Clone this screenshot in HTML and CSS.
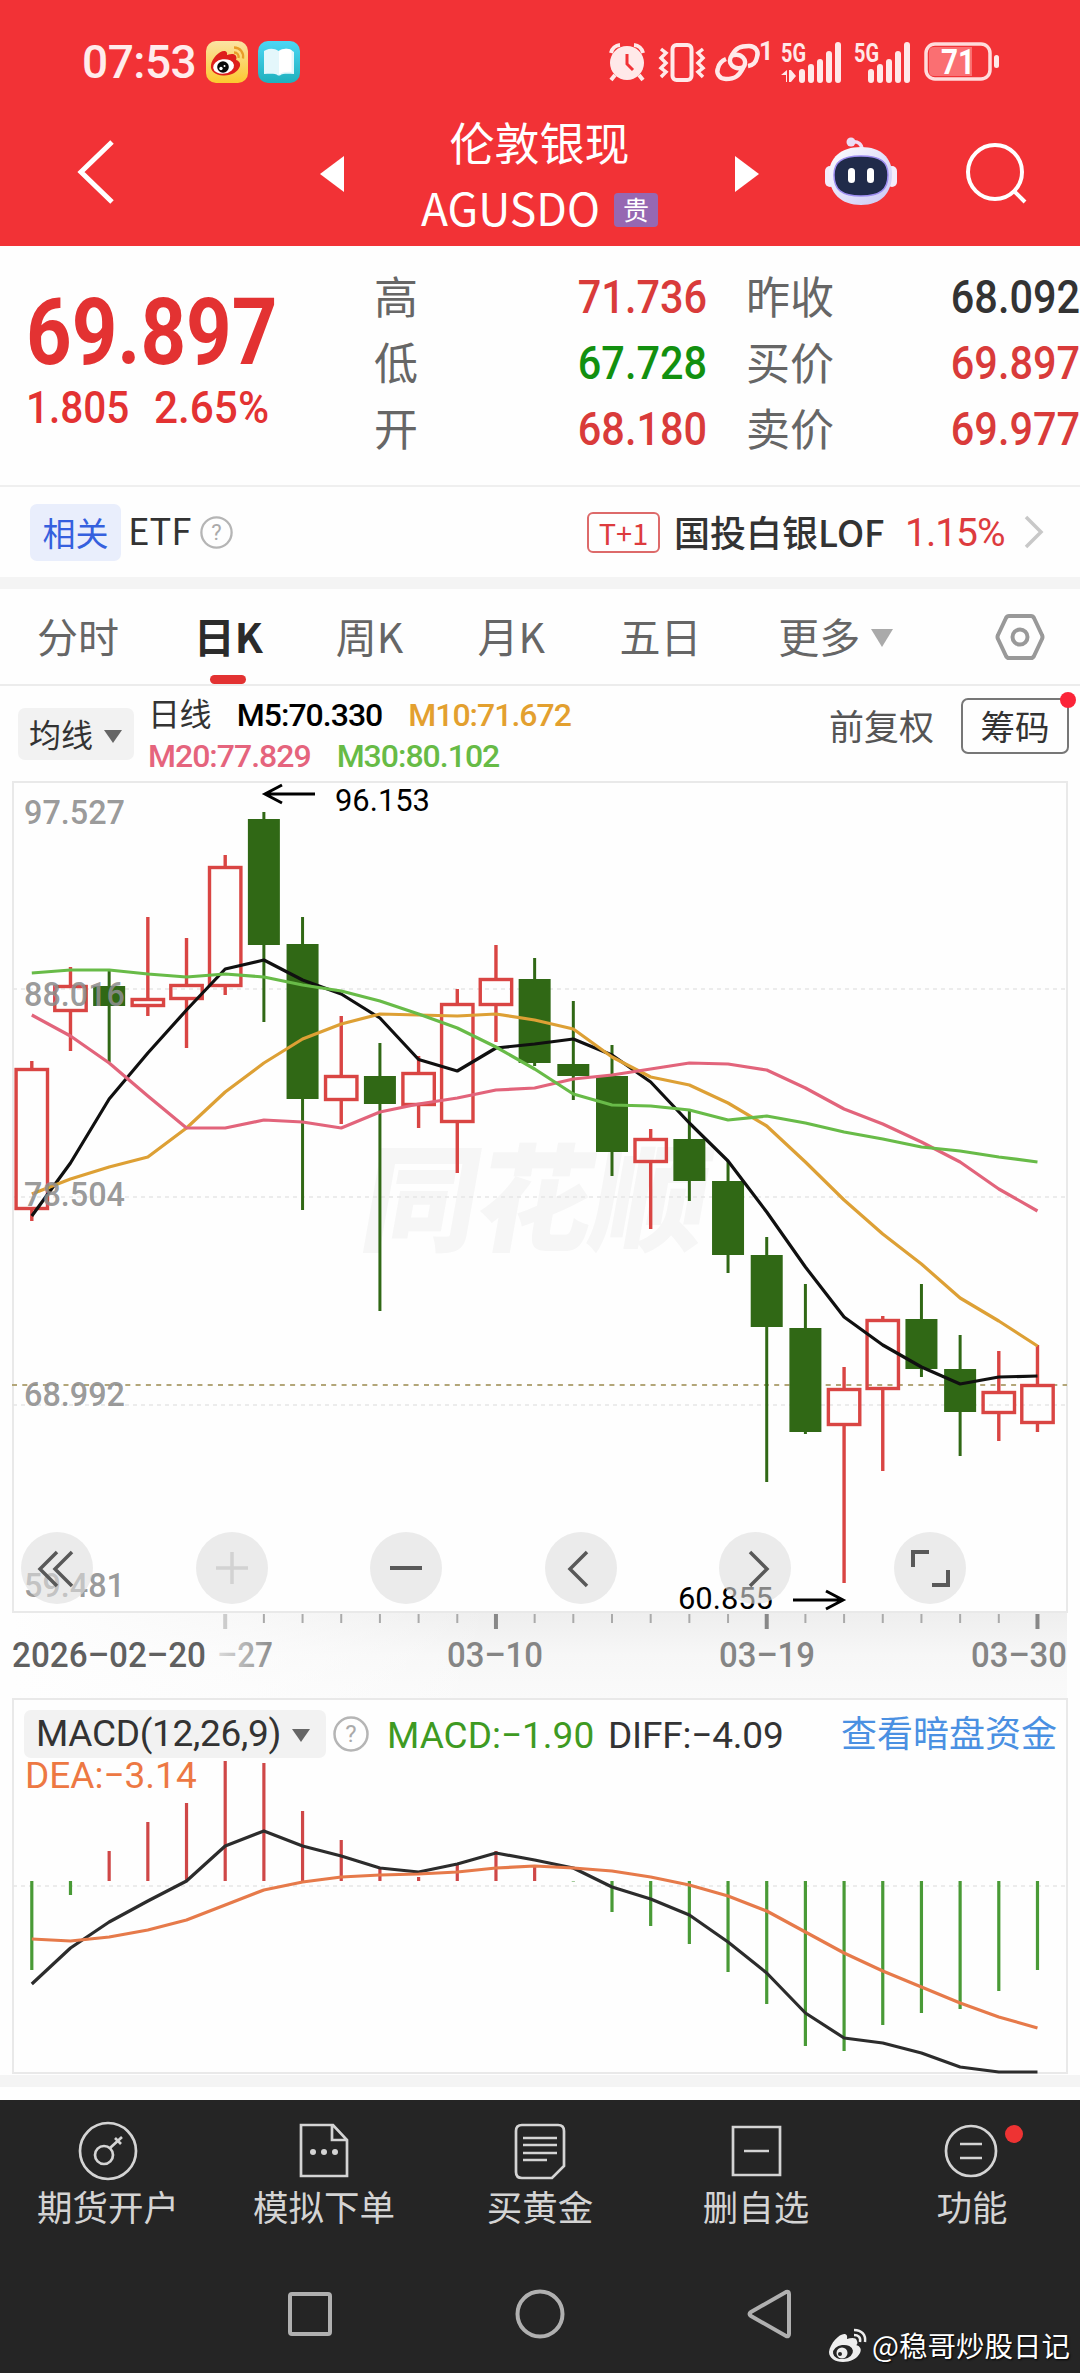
FILE: index.html
```html
<!DOCTYPE html>
<html lang="zh-CN">
<head>
  <meta charset="UTF-8" />
  <title>伦敦银现 AGUSDO</title>
  <link rel="stylesheet" href="styles.css">
</head>

<body>
  <header class="header">
    <div class="status">
      <span class="time">07:53</span>
      <svg class="app" viewBox="0 0 42 42">
        <defs><linearGradient id="gold" x2="0" y2="1"><stop stop-color="#fbe3a4" /><stop offset="1" stop-color="#fcc92f" /></linearGradient></defs>
        <rect width="42" height="42" rx="10" fill="url(#gold)" />
        <path d="M5 24c1-7 9-15 14-14 3 1 2 4 2 4s7-3 9 1c1 2 0 4 0 4s5 1 4 6c-2 6-9 10-17 9.500C9 34 4 30 5 24z" fill="#de1f1c" />
        <ellipse cx="17.500" cy="25.500" rx="10.500" ry="7.200" fill="#fff" transform="rotate(-8 17 25)" />
        <circle cx="17" cy="26" r="5.800" fill="#0a0a0a" /><circle cx="15" cy="27.500" r="1.700" fill="#fff" /><circle cx="18.500" cy="25" r="1" fill="#fff" />
        <path d="M28 6.500c6 0 10 5 9 11M28 11.500c3.500 0 5 2.500 4.500 5.500" fill="none" stroke="#e99c2a" stroke-width="2.300" />
      </svg>
      <svg class="app" viewBox="0 0 42 42">
        <defs><linearGradient id="cyan" x2="0" y2="1"><stop stop-color="#4cd7f5" /><stop offset="1" stop-color="#1fb0bd" /></linearGradient></defs>
        <rect width="42" height="42" rx="10" fill="url(#cyan)" />
        <path d="M6 10l2-1c4-2 9-1.500 12.500 1 3.500-2.500 8.500-3 12.500-1l3 2v22c-5 0-11-1-14 1.500h-2C17 32 11 33 6 33z" fill="#e4f7fb" />
        <path d="M21 10.500c3.500-3 8.500-3.500 12.500-1.500v22c-5-.5-9 0-12.500 2.500z" fill="#fff" />
      </svg>

      <div class="status-right">
        <svg width="38" height="40" viewBox="0 0 38 40">
          <circle cx="19" cy="21" r="17" fill="#ffe9e9" />
          <path d="M3 11a10 10 0 0 1 9-8M35 11a10 10 0 0 0-9-8M7 33l-4 5M31 33l4 5" stroke="#ffe9e9" stroke-width="4" fill="none" />
          <path d="M19 12v10l6 6" stroke="#f23236" stroke-width="3" fill="none" />
        </svg>
        <svg width="46" height="40" viewBox="0 0 46 40">
          <rect x="13.500" y="3" width="19" height="35" rx="4" stroke="#ffe9e9" stroke-width="4" fill="none" />
          <path d="M2 7l5 4-5 5 5 5-5 5 5 4-5 5M44 7l-5 4 5 5-5 5 5 5-5 4 5 5" stroke="#ffe9e9" stroke-width="3.500" fill="none" />
        </svg>
        <svg width="58" height="42" viewBox="0 0 58 42">
          <path d="M30 26c-10 4-18-4-12-12 4-7 8-9 17-9 7 0 10 6 8 11-1 5-3 8-9 9" stroke="#ffe9e9" stroke-width="4.500" fill="none" />
          <path d="M16 15c10-4 18 4 12 12-4 8-8 11-17 11C4 38 1 32 3 27c1-4 3-7 8-9" stroke="#ffe9e9" stroke-width="4.500" fill="none" transform="translate(1)" />
          <text x="45" y="19" class="tiny">1</text>
        </svg>
        <svg width="61" height="42" viewBox="0 0 61 42">
          <text x="0" y="21" class="tiny" textLength="25" lengthAdjust="spacingAndGlyphs">5G</text>
          <path d="M0 34l6-5v12H5v-7zM8 29h2l5 6-5 6H8z" fill="#ffe9e9" />
          <path d="M21 31v8M30 26v13M39 21v18M48 13v26M57 4v35" class="bars" />
        </svg>
        <svg width="57" height="42" viewBox="0 0 57 42">
          <text x="0" y="21" class="tiny" textLength="25" lengthAdjust="spacingAndGlyphs">5G</text>
          <path d="M17 31v8M26 26v13M35 21v18M44 13v26M53 4v35" class="bars" />
        </svg>
        <svg width="76" height="40" viewBox="0 0 76 40">
          <rect x="2" y="2" width="64" height="35" rx="9" fill="none" stroke="#ffdcdc" stroke-width="3.500" />
          <path d="M10 5h38v29H10q-5 0-5-5V10q0-5 5-5z" fill="#fa6f72" />
          <rect x="70" y="13" width="5" height="13" rx="2.500" fill="#ffe9e9" />
          <text x="17" y="32" class="battery" textLength="34" lengthAdjust="spacingAndGlyphs">71</text>
        </svg>
      </div>
    </div>

    <div class="topbar">
      <svg class="back" viewBox="0 0 38 66"><path d="M35 3L4 33l31 30" fill="none" stroke="#fff" stroke-width="5" /></svg>
      <svg class="prev" viewBox="0 0 24 36"><path d="M24 0v36L0 18z" fill="#fff" /></svg>
      <div class="title">
        <div class="name">伦敦银现</div>
        <div class="code">AGUSDO<span class="tag">贵</span></div>
      </div>
      <svg class="next" viewBox="0 0 24 36"><path d="M0 0v36l24-18z" fill="#fff" /></svg>
      <svg class="robot" viewBox="0 0 74 68">
        <defs><linearGradient id="shell" x2="1" y2="1"><stop stop-color="#fff" /><stop offset="1" stop-color="#c9c6f4" /></linearGradient></defs>
        <path d="M28 5c6-1 10 2 10 8" fill="none" stroke="#f3dcf3" stroke-width="3.500" />
        <circle cx="27" cy="5" r="4.500" fill="#ecdcf4" />
        <rect x="1" y="29" width="10" height="21" rx="5" fill="#f4ecfb" /><rect x="63" y="29" width="10" height="21" rx="5" fill="#f4ecfb" />
        <path d="M37 10c20 0 31 11 31 27 0 19-11 31-31 31S5 56 5 37c0-16 12-27 32-27z" fill="url(#shell)" />
        <path d="M37 19c20 0 27 6 27 19 0 15-8 21-27 21S10 53 10 38c0-13 8-19 27-19z" fill="#202b4a" stroke="#9d8df0" stroke-width="1.500" />
        <rect x="24" y="31" width="7" height="15" rx="3.500" fill="#fff" /><rect x="43" y="31" width="7" height="15" rx="3.500" fill="#fff" />
      </svg>
      <svg class="search" viewBox="0 0 62 62"><circle cx="29" cy="29" r="27" fill="none" stroke="#fff" stroke-width="4" /><path d="M48 48l11 11" stroke="#fff" stroke-width="4" /></svg>
    </div>
  </header>

  <section class="quote">
    <div class="price">
      <div class="last din">69.897</div>
      <div class="change"><span class="din">1.805</span><span class="din">2.65%</span></div>
    </div>
    <div class="facts">
      <span>高</span><b class="din up">71.736</b>
      <span>低</span><b class="din down">67.728</b>
      <span>开</span><b class="din up">68.180</b>
    </div>
    <div class="facts">
      <span>昨收</span><b class="din">68.092</b>
      <span>买价</span><b class="din up">69.897</b>
      <span>卖价</span><b class="din up">69.977</b>
    </div>
  </section>

  <section class="related">
    <span class="badge">相关</span>
    <span class="etf">ETF</span>
    <svg class="help" viewBox="0 0 36 36"><circle cx="18" cy="18" r="16.500" /><text x="18" y="26">?</text></svg>
    <span class="t1">T+1</span>
    <span class="fund">国投白银LOF</span>
    <span class="pct">1.15%</span>
    <svg class="arrow" viewBox="0 0 20 34"><path d="M2 2l15 15L2 32" fill="none" stroke="#c8c8c8" stroke-width="3.500" /></svg>
  </section>

  <nav class="tabs">
    <span>分时</span>
    <span class="active">日K</span>
    <span>周K</span>
    <span>月K</span>
    <span class="five">五日</span>
    <span class="more">更多<i class="caret"></i></span>
    <svg viewBox="0 0 50 48"><path d="M14 3h22q2 0 3 2l8 17q1 2 0 4l-8 17q-1 2-3 2H14q-2 0-3-2L3 26q-1-2 0-4l8-17q1-2 3-2z" /><circle cx="25" cy="24" r="7.500" /></svg>
  </nav>

  <section class="ma">
    <span class="select">均线<i class="caret dark"></i></span>
    <div class="ma-values">
      <div><span class="cn">日线</span><span class="m5">M5:70.330</span><span class="m10">M10:71.672</span></div>
      <div><span class="m20">M20:77.829</span><span class="m30">M30:80.102</span></div>
    </div>
    <span class="adjust">前复权</span>
    <span class="chips">筹码</span>
  </section>

  <section class="kline">
    <svg id="kline" width="1080" height="917" viewBox="0 781 1080 917"></svg>
    <div class="tools">
      <svg viewBox="0 0 72 72"><path d="M36 20L19 37l17 17M51 20L34 37l17 17" /></svg>
      <svg class="off" viewBox="0 0 72 72"><path d="M36 20v32M20 36h32" /></svg>
      <svg viewBox="0 0 72 72"><path d="M20 36h32" stroke-width="4" /></svg>
      <svg viewBox="0 0 72 72"><path d="M42 20L25 37l17 17" /></svg>
      <svg viewBox="0 0 72 72"><path d="M31 20l17 17-17 17" /></svg>
      <svg viewBox="0 0 72 72"><path d="M19 35V20h16M54 38v15H38" stroke-width="4" /></svg>
    </div>
  </section>

  <section class="macd">
    <div class="macd-head">
      <span class="select">MACD(12,26,9)<i class="caret dark"></i></span>
      <svg class="help" viewBox="0 0 36 36"><circle cx="18" cy="18" r="16.500" /><text x="18" y="26">?</text></svg>
      <span class="v-macd">MACD:−1.90</span>
      <span class="v-diff">DIFF:−4.09</span>
      <a class="link">查看暗盘资金</a>
    </div>
    <div class="dea">DEA:−3.14</div>
    <svg id="macd" width="1080" height="377" viewBox="0 1698 1080 377"></svg>
  </section>
  <div class="gap"></div>

  <footer class="footer">
    <div class="menu">
      <div><svg viewBox="0 0 60 60"><circle cx="30" cy="30" r="28" /><circle cx="26" cy="34" r="9" /><path d="M32 27l12-11M37 17l6 6" /></svg>期货开户</div>
      <div><svg viewBox="0 0 60 60"><path d="M7 4h32l14 15v36H7zM38 4v15h15" /><g class="dots"><circle cx="19" cy="31" r="3" /><circle cx="30" cy="31" r="3" /><circle cx="41" cy="31" r="3" /></g></svg>模拟下单</div>
      <div><svg viewBox="0 0 60 60"><path d="M12 4h36q6 0 6 6v35L42 57H12q-6 0-6-6V10q0-6 6-6zM13 17h34M13 24h34M13 32h34M13 39h24" /></svg>买黄金</div>
      <div><svg viewBox="0 0 60 60"><path d="M7 6h47v48H7zM18 30h25" /></svg>删自选</div>
      <div><svg viewBox="0 0 60 60"><circle cx="29" cy="30" r="25" /><path d="M18 23h22M18 37h22" /></svg>功能<i class="dot"></i></div>
    </div>
    <div class="system">
      <svg viewBox="0 0 50 50"><rect x="5" y="5" width="40" height="40" rx="2" /></svg>
      <svg viewBox="0 0 50 50"><circle cx="25" cy="25" r="22.500" /></svg>
      <svg viewBox="0 0 50 50"><path d="M6 23L41 3q3-1 3 2v40q0 3-3 2L6 27q-3-2 0-4z" /></svg>
    </div>
    <div class="credit">
      <svg viewBox="0 0 40 34">
        <path d="M1 24C2 15 12 5 17 6c3 1 2 4 2 5 4-1 9-2 10 2 1 2 0 4-1 4 4 1 6 4 4 8-3 6-10 9-17 9C7 34 1 30 1 24z" fill="#eee" />
        <ellipse cx="15" cy="24" rx="10" ry="7" fill="#252525" transform="rotate(-8 15 24)" /><circle cx="14" cy="25" r="5.500" fill="#eee" />
        <circle cx="12" cy="26" r="2" fill="#252525" /><path d="M26 2c8 0 12 5 11 12M26 7c4 0 7 2 6 7" fill="none" stroke="#eee" stroke-width="2.500" />
      </svg>
      @稳哥炒股日记
    </div>
  </footer>

  <script src="chart.js"></script>
</body>
</html>
```

FILE: styles.css
```css
* {
  box-sizing: border-box;
  margin: 0;
  padding: 0;
}

body {
  width: 1080px;
  background-color: #fefefe;
  color: #333;
  font-family: "Noto Sans CJK SC", sans-serif;
  line-height: 1;
}

svg {
  display: block;
  flex: none;
  overflow: visible;
}

i {
  font-style: normal;
}

/* narrow figures, like DIN */
.din {
  display: inline-block;
  font-family: Roboto, sans-serif;
  font-weight: 500;
  transform: scaleX(0.9);
  transform-origin: left;
}

.up {
  color: #d93b3a;
}
.down {
  color: #12900f;
}

/* header */
.header {
  height: 246px;
  background-color: #f23236;
  color: white;
}

.status {
  display: flex;
  align-items: center;
  height: 122px;
  padding: 2px 80px 0 82px;
}
.time {
  width: 124px;
  font-family: Roboto, sans-serif;
  font-size: 46px;
  font-weight: 500;
  letter-spacing: -0.5px;
  color: #ffecec;
}
.app {
  width: 42px;
  height: 42px;
  margin-right: 10px;
}
.status-right {
  display: flex;
  align-items: center;
  margin-left: auto;
  gap: 13px;
}
.status-right svg:nth-child(3) {
  margin-left: -4px;
}
.status-right svg:nth-child(4) {
  margin-left: -4px;
}
.status-right svg:nth-child(5) {
  margin-left: -1px;
}
.tiny {
  font-family: Roboto, sans-serif;
  font-size: 25px;
  font-weight: 700;
  fill: #ffe9e9;
}
.battery {
  font-family: Roboto, sans-serif;
  font-size: 35px;
  font-weight: 700;
  fill: white;
}
.bars {
  stroke: #ffe9e9;
  stroke-width: 6;
  stroke-linecap: round;
}

.topbar {
  display: flex;
  height: 124px;
  padding-left: 77px;
}
.back {
  width: 38px;
  height: 66px;
  margin-top: 17px;
}
.prev,
.next {
  width: 24px;
  height: 36px;
  margin-top: 34px;
}
.prev {
  margin-left: 205px;
}
.title {
  width: 391px;
  text-align: center;
}
.name {
  font-size: 45px;
  line-height: 46px;
  margin-top: -3px;
}
.code {
  display: flex;
  align-items: center;
  justify-content: center;
  font-size: 44.5px;
  line-height: 60px;
  margin-top: 12px;
}
.tag {
  width: 44px;
  height: 34px;
  margin: 5px 0 0 14px;
  border-radius: 4px;
  background-color: #9668b2;
  font-size: 26px;
  line-height: 32px;
}
.robot {
  width: 74px;
  height: 68px;
  margin: 15px 0 0 65px;
}
.search {
  width: 62px;
  height: 62px;
  margin: 21px 0 0 68px;
}

/* quote */
.quote {
  display: flex;
  height: 241px;
  padding-top: 18px;
  border-bottom: 2px solid #efefef;
}
.price {
  width: 374px;
  padding: 23px 0 0 26px;
  color: #e33232;
}
.last {
  font-size: 92px;
  line-height: 92px;
  font-weight: 700;
  transform: scaleX(0.865);
}
.change {
  display: flex;
  gap: 13px;
  margin-top: 6px;
  font-size: 45px;
}
.change .din:last-child {
  transform: scaleX(0.94);
}
.facts {
  display: grid;
  grid-template-columns: auto 1fr;
  grid-auto-rows: 66px;
  align-items: center;
  align-content: start;
  width: 333px;
  margin-right: 39px;
  font-size: 44px;
}
.facts:last-child {
  width: 334px;
  margin-right: 0;
}
.facts span {
  color: #666;
  padding-bottom: 5px;
}
.facts b {
  font-size: 46px;
  text-align: right;
  transform-origin: right;
}

.related {
  display: flex;
  align-items: center;
  height: 90px;
  padding-left: 30px;
}
.badge {
  width: 91px;
  border-radius: 7px;
  background-color: #e9eefc;
  color: #3560de;
  font-size: 33px;
  line-height: 57px;
  text-align: center;
}
.etf {
  width: 71px;
  padding: 0 0 3px 7px;
  font-size: 36.5px;
}
.help {
  width: 33px;
  height: 33px;
}
.help circle {
  fill: none;
  stroke: #b5b5b5;
  stroke-width: 2.5;
}
.help text {
  font-family: Roboto, sans-serif;
  font-size: 24px;
  fill: #aaa;
  text-anchor: middle;
}
.related .help {
  margin-left: 8px;
}
.t1 {
  width: 73px;
  height: 41px;
  margin-left: 354px;
  border: 2px solid #dd6a6a;
  border-radius: 6px;
  color: #dd3b3e;
  font-size: 29px;
  line-height: 36px;
  text-align: center;
}
.fund {
  width: 232px;
  padding: 0 0 2px 14px;
  font-size: 36px;
  font-weight: 500;
  white-space: nowrap;
}
.pct {
  width: 132px;
  padding: 3px 0 0 13px;
  color: #dd3b3e;
  font-family: Roboto, sans-serif;
  font-size: 39px;
  letter-spacing: -1px;
}
.arrow {
  width: 20px;
  height: 34px;
}

/* period tabs */
.tabs {
  display: flex;
  align-items: center;
  height: 109px;
  padding: 0 35px 0 37px;
  border-top: 12px solid #f4f4f4;
  border-bottom: 2px solid #ececec;
  color: #666;
  font-size: 41px;
}
.tabs span {
  position: relative;
  width: 142px;
  height: 95px;
  line-height: 92px;
  white-space: nowrap;
}
.tabs span:first-child {
  width: 157px;
}
.tabs .five {
  width: 159px;
}
.tabs .more {
  width: 217px;
}
.tabs .active {
  color: #2b2b2b;
  font-weight: 700;
}
.active::after {
  content: "";
  position: absolute;
  left: 16px;
  bottom: 0;
  width: 36px;
  height: 9px;
  border-radius: 5px;
  background-color: #e33232;
}
.tabs svg {
  width: 50px;
  height: 48px;
  fill: none;
  stroke: #999;
  stroke-width: 4;
}
.caret {
  display: inline-block;
  margin-left: 11px;
  vertical-align: 6px;
  border: 11px solid transparent;
  border-top: 18px solid #aaa;
  border-bottom: 0;
}
.caret.dark {
  border-width: 13px 9px 0;
  border-top-color: #666;
  vertical-align: 4px;
}

/* moving averages */
.ma {
  display: flex;
  align-items: center;
  height: 95px;
  padding-left: 18px;
}
.select {
  border-radius: 7px;
  background-color: #f2f2f2;
  white-space: nowrap;
}
.ma .select {
  width: 116px;
  height: 52px;
  padding-left: 11px;
  font-size: 32px;
  line-height: 50px;
}
.ma-values {
  width: 695px;
  padding: 4px 0 0 14px;
  font-family: Roboto, "Noto Sans CJK SC", sans-serif;
  font-size: 32px;
  line-height: 41px;
}
.ma-values div {
  display: flex;
  gap: 26px;
  letter-spacing: -0.6px;
}
.m5 {
  color: black;
}
.m10 {
  color: #e3a02f;
}
.m20 {
  color: #e5647d;
}
.m30 {
  color: #67bb46;
}
.m5,
.m10,
.m20,
.m30 {
  font-weight: 500;
  letter-spacing: -1px;
}
.adjust {
  width: 132px;
  padding-bottom: 18px;
  color: #555;
  font-size: 35px;
}
.chips {
  position: relative;
  width: 108px;
  height: 56px;
  margin-bottom: 15px;
  border: 2px solid #777;
  border-radius: 7px;
  font-size: 34.5px;
  line-height: 50px;
  text-align: center;
}
.chips::after {
  content: "";
  position: absolute;
  top: -8px;
  right: -9px;
  width: 16px;
  height: 16px;
  border-radius: 50%;
  background-color: #fb2438;
}

/* candles */
.kline {
  position: relative;
  height: 917px;
}
.tools {
  position: absolute;
  left: 21px;
  top: 751px;
  display: flex;
  gap: 102.5px;
}
.tools svg {
  width: 72px;
  height: 72px;
  border-radius: 50%;
  background-color: rgba(222, 222, 222, 0.6);
  fill: none;
  stroke: #595959;
  stroke-width: 3.5;
}
.tools .off {
  stroke: #d2d2d2;
}
.frame {
  fill: none;
  stroke: #e9e9e9;
  stroke-width: 2;
}
.grid {
  stroke: #e6e6e6;
  stroke-width: 1.5;
  stroke-dasharray: 4 4;
}
.now {
  stroke: #b3a679;
  stroke-width: 2;
  stroke-dasharray: 5 5.3;
}
.mark {
  font-size: 116px;
  font-weight: 900;
  fill: #f6f6f6;
}
.label {
  font-family: Roboto, sans-serif;
  font-size: 34px;
  font-weight: 500;
  fill: #8d8d8d;
  fill-opacity: 0.9;
}
.peak {
  font-family: Roboto, sans-serif;
  font-size: 31px;
  fill: black;
}
.date {
  font-family: Roboto, sans-serif;
  font-size: 35px;
  font-weight: 500;
  fill: #858585;
}
.line {
  fill: none;
  stroke-width: 3.2;
  stroke-linejoin: round;
}

/* macd */
.macd {
  position: relative;
  height: 377px;
}
.macd #macd {
  margin-top: -95px;
}
.macd-head {
  display: flex;
  align-items: center;
  height: 72px;
  padding-left: 24px;
  font-family: Roboto, "Noto Sans CJK SC", sans-serif;
  font-size: 37px;
}
.macd .select {
  width: 302px;
  padding-left: 12px;
  line-height: 48px;
  letter-spacing: -0.3px;
}
.macd .help {
  width: 36px;
  height: 36px;
  margin-left: 7px;
}
.v-macd {
  width: 221px;
  margin-left: 18px;
  padding-top: 2px;
  color: #3e9a22;
  white-space: nowrap;
}
.v-diff {
  width: 233px;
  padding-top: 2px;
  letter-spacing: -0.2px;
}
.link {
  padding-top: 1px;
  color: #4a90e2;
  font-size: 36px;
  white-space: nowrap;
}
.dea {
  height: 23px;
  padding-left: 25px;
  color: #ed7843;
  font-family: Roboto, sans-serif;
  font-size: 37px;
  line-height: 11px;
}

.gap {
  height: 25px;
  border-top: 12px solid #f4f4f4;
}

/* bottom bars */
.footer {
  position: relative;
  height: 273px;
  background-color: #252525;
}
.menu {
  display: grid;
  grid-template-columns: repeat(5, 1fr);
  padding-top: 21px;
  color: #d4d4d4;
  font-size: 35.5px;
}
.menu div {
  position: relative;
  display: flex;
  flex-direction: column;
  align-items: center;
  gap: 7px;
}
.menu svg {
  width: 60px;
  height: 60px;
  fill: none;
  stroke: #d4d4d4;
  stroke-width: 2.7;
}
.menu .dots {
  fill: #d4d4d4;
  stroke: none;
}
.dot {
  position: absolute;
  top: 4px;
  right: 57px;
  width: 18px;
  height: 18px;
  border-radius: 50%;
  background-color: #ee3333;
}
.system {
  display: flex;
  justify-content: center;
  gap: 180px;
  margin-top: 65px;
}
.system svg {
  width: 50px;
  height: 50px;
  fill: none;
  stroke: #b0b0b0;
  stroke-width: 4;
}
.credit {
  position: absolute;
  right: 10px;
  bottom: 11px;
  display: flex;
  align-items: center;
  gap: 4px;
  color: white;
  font-size: 28.5px;
  text-shadow: 1px 1px 2px black;
}
.credit svg {
  width: 40px;
  height: 34px;
}
```

FILE: chart.js
```js
const RED = "#d94543";
const GREEN = "#306815";
const x = i => 31.8 + i * 38.68;

// up?, high, body top, body bottom, low
const candles = [
  [1, 1061, 1068, 1210, 1221], [1, 967, 985, 1012, 1051], [0, 969, 986, 1006, 1062],
  [1, 917, 998, 1007, 1016], [1, 938, 984, 1000, 1048], [1, 855, 866, 987, 995],
  [0, 812, 819, 945, 1022], [0, 917, 944, 1099, 1210], [1, 1016, 1075, 1101, 1124],
  [0, 1043, 1076, 1104, 1311], [1, 1056, 1072, 1106, 1128], [1, 989, 1003, 1123, 1173],
  [1, 945, 978, 1006, 1042], [0, 958, 979, 1063, 1066], [0, 1001, 1064, 1076, 1100],
  [0, 1045, 1076, 1152, 1176], [1, 1129, 1138, 1163, 1229], [0, 1111, 1139, 1181, 1201],
  [0, 1161, 1181, 1255, 1273], [0, 1237, 1255, 1327, 1482], [0, 1284, 1328, 1432, 1434],
  [1, 1367, 1388, 1426, 1583], [1, 1316, 1319, 1390, 1471], [0, 1284, 1319, 1369, 1377],
  [0, 1335, 1369, 1412, 1456], [1, 1351, 1391, 1414, 1441], [1, 1345, 1384, 1424, 1432]
];

const averages = [
  ["#101010", [1216, 1163, 1099, 1053, 1010, 969, 960, 980, 994, 1018, 1059.5, 1071, 1048, 1044, 1039, 1055, 1082, 1123, 1161, 1212, 1267, 1317, 1345, 1367, 1384, 1377, 1376]],
  ["#dda035", [1194, 1179, 1167, 1157, 1128, 1092, 1063, 1039, 1024, 1014, 1015, 1016, 1014, 1020, 1029, 1057, 1077, 1085, 1103, 1126, 1162, 1200, 1234, 1264, 1298, 1321, 1346]],
  ["#e2647b", [1015, 1036, 1063, 1096, 1128, 1128, 1120, 1122, 1128, 1112, 1104, 1098, 1090, 1088, 1079, 1075, 1069, 1063, 1064, 1070, 1088, 1109, 1124, 1142, 1162, 1189, 1211]],
  ["#68bb48", [973, 970, 970, 974, 977, 974, 977, 985, 991, 1001, 1014, 1028, 1047, 1069, 1094, 1105, 1106, 1110, 1120, 1116, 1123, 1132, 1139, 1147, 1151, 1157, 1162]]
];

const bars = [1970, 1895, 1851, 1822, 1803, 1761, 1763, 1811, 1840, 1868, 1877, 1864, 1851, 1867, 1881.5, 1912, 1926, 1944, 1972, 2004, 2046, 2051, 2025, 2013, 2009, 1991, 1970];
const diff = [1984, 1948, 1922, 1901, 1881, 1846, 1831, 1846, 1856, 1868, 1872, 1864, 1853, 1860, 1868, 1887, 1899, 1915, 1942, 1973, 2013, 2038, 2043, 2053, 2067, 2072, 2072];
const dea = [1939, 1941, 1937, 1930, 1920, 1905, 1890, 1882, 1877, 1875, 1874, 1872, 1868, 1866, 1868, 1871, 1877, 1885, 1896, 1911, 1932, 1953, 1971, 1987, 2003, 2017, 2028];

function line(values, color) {
  const points = values.map((v, i) => x(i) + "," + v).join(" ");
  return `<polyline class="line" stroke="${color}" points="${points}"/>`;
}

function text(cls, left, y, width, value, extra = "") {
  return `<text class="${cls}" x="${left}" y="${y}" textLength="${width}" lengthAdjust="spacingAndGlyphs" ${extra}>${value}</text>`;
}

let k = `<defs>
  <linearGradient id="axis" x2="0" y2="1"><stop stop-color="#eee"/><stop offset=".5" stop-color="#f7f7f7"/><stop offset="1" stop-color="#fafafa"/></linearGradient>
  <linearGradient id="fade"><stop stop-color="#fefefe"/><stop offset=".5" stop-color="#fefefe" stop-opacity=".6"/><stop offset="1" stop-color="#fefefe" stop-opacity="0"/></linearGradient>
  <linearGradient id="old" gradientUnits="userSpaceOnUse" x1="205" x2="275" y1="0" y2="0"><stop stop-color="#eee"/><stop offset="1" stop-color="#888"/></linearGradient>
</defs>
<rect x="12" y="1612" width="1055" height="86" fill="url(#axis)"/>
<rect x="12" y="1612" width="480" height="86" fill="url(#fade)"/>
<rect class="frame" x="13" y="782" width="1054" height="830"/>
<text class="mark" x="360" y="1242" textLength="345" transform="translate(216) skewX(-10)">同花顺</text>`;

[989, 1197, 1405].forEach(y => {
  k += `<path class="grid" d="M13 ${y}H1067"/>`;
});
k += `<path class="now" d="M12 1385H1067"/>`;

candles.forEach(([up, high, top, bottom, low], i) => {
  const c = x(i);
  if (up) {
    k += `<path d="M${c} ${high}V${top}M${c} ${bottom}V${low}" stroke="${RED}" stroke-width="3.4"/>`;
    k += `<rect x="${c - 15.7}" y="${top + 1.5}" width="31.4" height="${bottom - top - 3}" fill="none" stroke="${RED}" stroke-width="3.4"/>`;
  } else {
    k += `<path d="M${c} ${high}V${low}" stroke="${GREEN}" stroke-width="3"/>`;
    k += `<rect x="${c - 16}" y="${top}" width="32" height="${bottom - top}" fill="${GREEN}"/>`;
  }
});
averages.forEach(([color, values]) => {
  k += line(values, color);
});

[["97.527", 824], ["88.016", 1006], ["78.504", 1206], ["68.992", 1406], ["59.481", 1597]].forEach(([v, y]) => {
  k += text("label", 24, y, 101, v);
});
k += text("peak", 335, 811, 95, "96.153");
k += text("peak", 678, 1609, 95, "60.855");
k += `<path d="M315 794H265M282 785L265 794L282 803" fill="none" stroke="#000" stroke-width="3"/>`;
k += `<path d="M793 1600H843M826 1591L843 1600L826 1609" fill="none" stroke="#000" stroke-width="3"/>`;

for (let i = 5; i < candles.length; i++) {
  const major = i % 7 === 5;
  k += `<path d="M${x(i)} 1614V${major ? 1629 : 1623}" stroke="${i === 5 ? "#ccc" : major ? "#888" : "#aaa"}" stroke-width="${major ? 4 : 2}"/>`;
}
k += text("date", 12, 1667, 194, "2026–02–20", 'style="fill:#606060"');
k += text("date", 217, 1667, 56, "–27", 'style="fill:url(#old)"');
k += text("date", 447, 1667, 96, "03–10");
k += text("date", 719, 1667, 96, "03–19");
k += text("date", 971, 1667, 96, "03–30");
document.getElementById("kline").innerHTML = k;

let m = `<rect class="frame" x="13" y="1699" width="1054" height="374"/><path class="grid" d="M13 1886H1067"/>`;
bars.forEach((v, i) => {
  m += `<path d="M${x(i)} 1881V${v}" stroke="${v < 1881 ? "#cf4747" : "#499a36"}" stroke-width="3.2"/>`;
});
m += line(diff, "#2c2c2c") + line(dea, "#e67a4a");
document.getElementById("macd").innerHTML = m;
```
